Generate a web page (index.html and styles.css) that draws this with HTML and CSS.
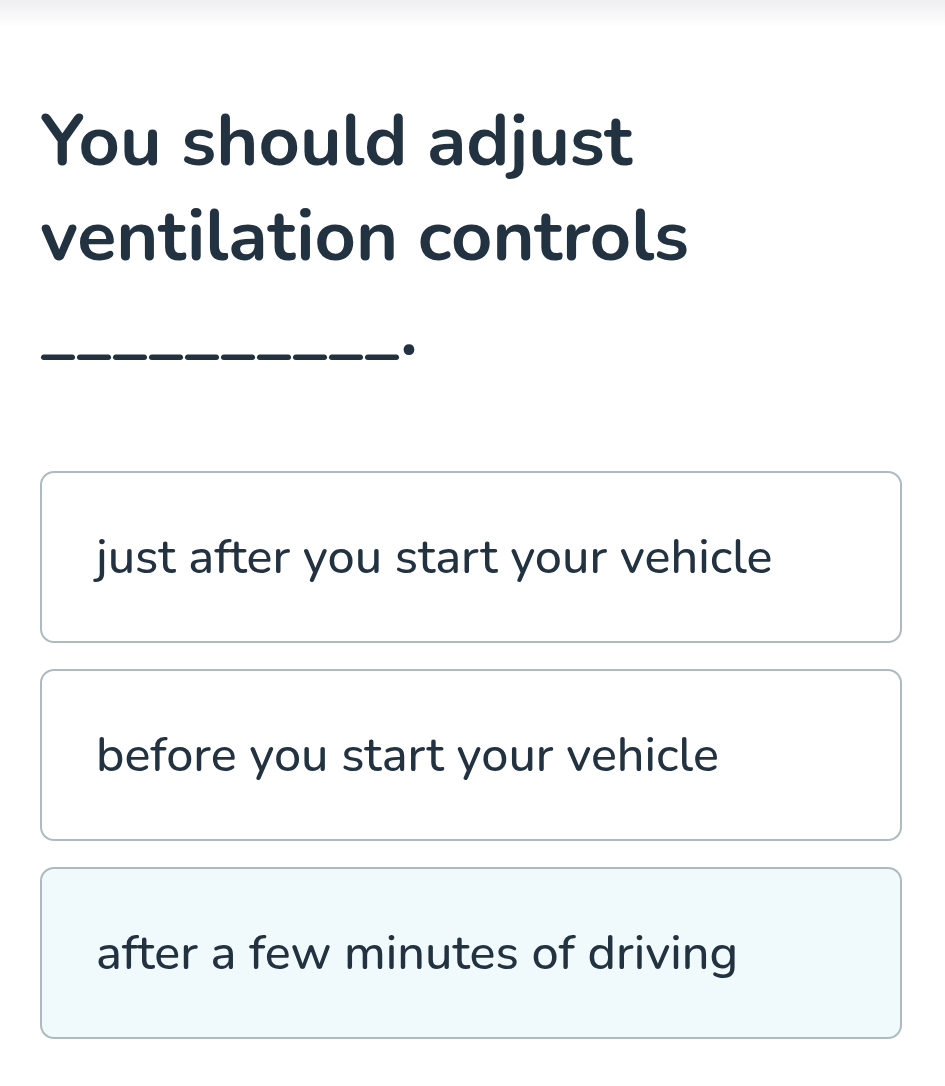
FILE: index.html
```html
<!DOCTYPE html>
<html lang="en">
<head>
    <meta charset="UTF-8">
    <meta name="viewport" content="width=device-width, initial-scale=1.0">
    <title>Question</title>
    <link rel="stylesheet" href="styles.css">
</head>
<body>
    <div class="top-shade"></div>
    <div class="container">
        <h1 class="question">You should adjust ventilation controls <span class="blank">__________</span>.</h1>

        <div class="answers">
            <div class="answer">just after you start your vehicle</div>
            <div class="answer">before you start your vehicle</div>
            <div class="answer selected">after a few minutes of driving</div>
        </div>
    </div>
</body>
</html>
```

FILE: styles.css
```css
body {
    font-family: "Nunito", "Lato", "Open Sans", sans-serif;
    margin: 0;
    background-color: #fff;
    color: #223241;
}
.top-shade {
    height: 28px;
    background: linear-gradient(to bottom, #efeff2, #fff);
}
.container {
    padding: 0 43px 0 40px;
}
.question {
    font-size: 72px;
    font-weight: 700;
    line-height: 95px;
    margin: 66px 0 0 0;
    width: 700px;
}
.answers {
    display: flex;
    flex-direction: column;
    gap: 26px;
    margin-top: 92px;
}
.answer {
    box-sizing: border-box;
    height: 172px;
    display: flex;
    align-items: center;
    padding-left: 54px;
    border: 2px solid #adbbc0;
    border-radius: 14px;
    font-size: 48.5px;
    font-weight: 500;
    background: #fff;
}
.answer.selected {
    background-color: #f0f9fb;
}
```
